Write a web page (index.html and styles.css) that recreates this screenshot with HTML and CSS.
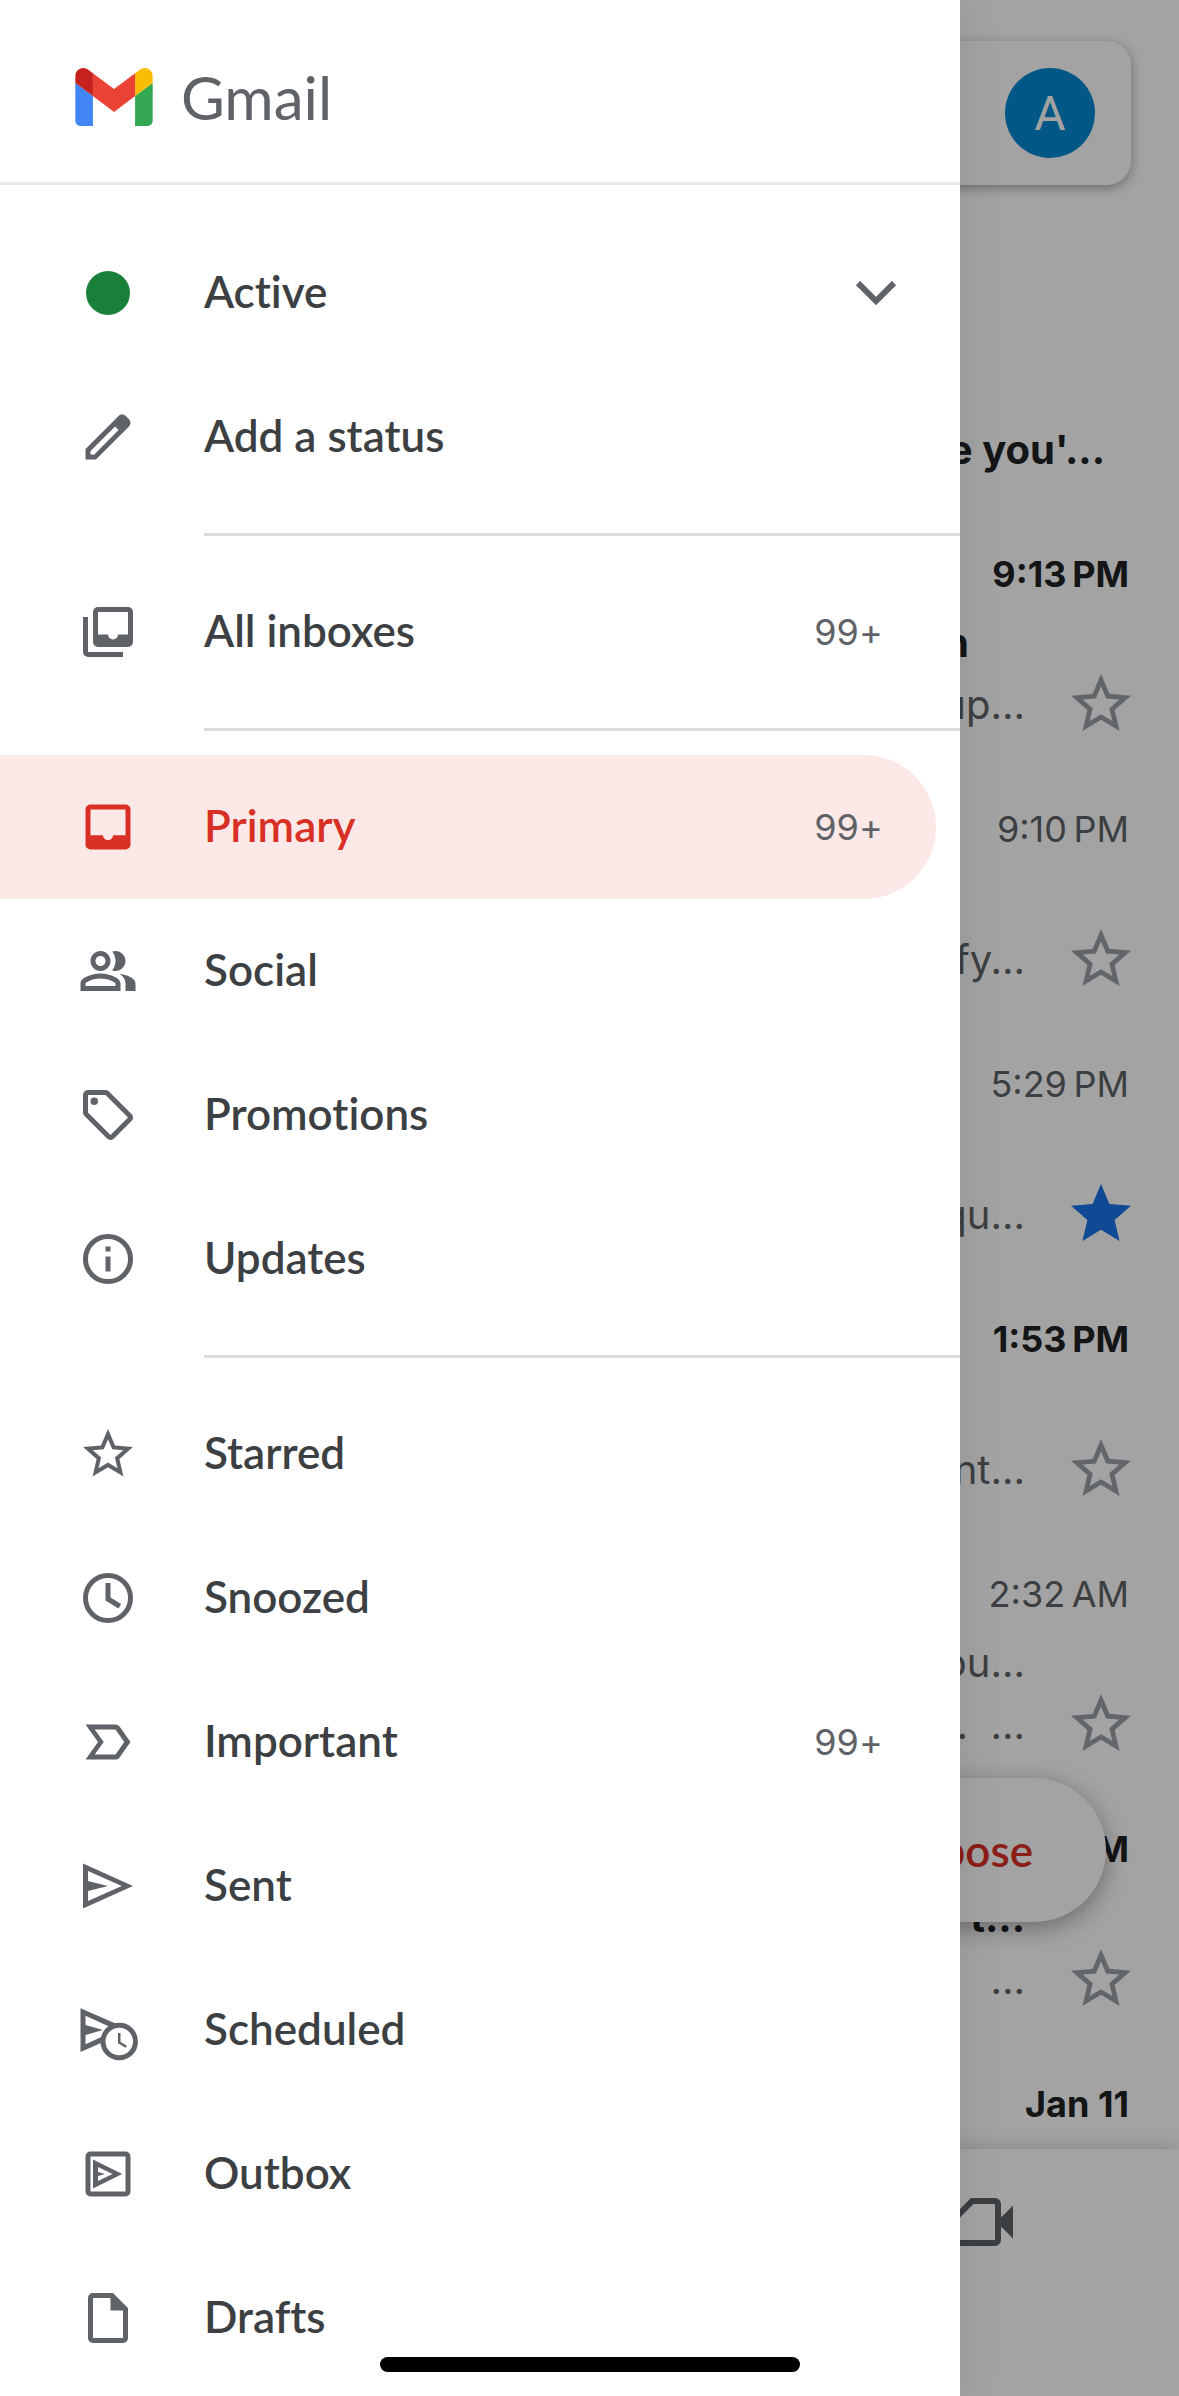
FILE: index.html
```html
<!DOCTYPE html>
<html lang="en">
<head>
    <meta charset="UTF-8">
    <meta name="viewport" content="width=device-width, initial-scale=1.0">
    <title>Gmail</title>
    <link rel="stylesheet" href="styles.css">
</head>
<body>
    <!-- shared star shapes -->
    <svg class="sprite" aria-hidden="true">
        <symbol id="star" viewBox="0 0 24 24">
            <path d="M22 9.24l-7.19-.62L12 2 9.19 8.63 2 9.24l5.46 4.73L5.82 21 12 17.27 18.18 21l-1.63-7.03L22 9.24zM12 15.4l-3.76 2.27 1-4.28-3.32-2.88 4.38-.38L12 6.1l1.71 4.04 4.38.38-3.32 2.88 1 4.28L12 15.4z"/>
        </symbol>
        <symbol id="star-full" viewBox="0 0 24 24">
            <path d="M12 17.27L18.18 21l-1.64-7.03L22 9.24l-7.19-.61L12 2 9.19 8.63 2 9.24l5.46 4.73L5.82 21z"/>
        </symbol>
    </svg>

    <div class="app">
        <main class="inbox">
            <div class="search-bar">
                <button class="avatar">A</button>
            </div>

            <ul class="mail-list">
                <li class="mail unread promo">
                    <p class="snippet">e you'...</p>
                </li>
                <li class="mail unread">
                    <time class="time">9:13&#8239;PM</time>
                    <p class="subject short">n</p>
                    <p class="snippet read">up...</p>
                    <button class="star" aria-label="Star"><svg><use href="#star"/></svg></button>
                </li>
                <li class="mail">
                    <time class="time">9:10&#8239;PM</time>
                    <p class="snippet">fy...</p>
                    <button class="star" aria-label="Star"><svg><use href="#star"/></svg></button>
                </li>
                <li class="mail">
                    <time class="time">5:29&#8239;PM</time>
                    <p class="snippet">qu...</p>
                    <button class="star on" aria-label="Unstar"><svg><use href="#star-full"/></svg></button>
                </li>
                <li class="mail unread">
                    <time class="time">1:53&#8239;PM</time>
                    <p class="snippet read">nt...</p>
                    <button class="star" aria-label="Star"><svg><use href="#star"/></svg></button>
                </li>
                <li class="mail">
                    <time class="time">2:32&#8239;AM</time>
                    <p class="subject">ou...</p>
                    <p class="snippet">e. &nbsp;...</p>
                    <button class="star" aria-label="Star"><svg><use href="#star"/></svg></button>
                </li>
                <li class="mail unread">
                    <time class="time">PM</time>
                    <p class="subject">r t...</p>
                    <p class="snippet read">...</p>
                    <button class="star" aria-label="Star"><svg><use href="#star"/></svg></button>
                </li>
                <li class="mail unread">
                    <time class="time">Jan 11</time>
                </li>
            </ul>

            <button class="compose">Compose</button>

            <nav class="tabs">
                <button class="tab" aria-label="Meet">
                    <svg viewBox="0 0 24 24"><path d="M8 4L2 10v8a2 2 0 0 0 2 2h12a2 2 0 0 0 2-2v-4.5l4 4v-11l-4 4V6a2 2 0 0 0-2-2H8zm.8 2H16v12H4v-7.2L8.8 6z"/></svg>
                </button>
            </nav>
        </main>

        <div class="scrim"></div>

        <aside class="drawer">
            <header class="brand">
                <svg class="logo" viewBox="52 42 88 66">
                    <path fill="#4285f4" d="M58 108h14V74L52 59v43c0 3.32 2.69 6 6 6"/>
                    <path fill="#34a853" d="M120 108h14c3.32 0 6-2.69 6-6V59l-20 15"/>
                    <path fill="#fbbc04" d="M120 48v26l20-15v-8c0-7.42-8.47-11.65-14.4-7.2"/>
                    <path fill="#ea4335" d="M72 74V48l24 18 24-18v26L96 92"/>
                    <path fill="#c5221f" d="M52 51v8l20 15V48l-5.6-4.2c-5.94-4.45-14.4-.22-14.4 7.2"/>
                </svg>
                <h1>Gmail</h1>
            </header>

            <nav class="menu">
                <button class="item">
                    <span class="icon"><span class="dot"></span></span>
                    <span class="label">Active</span>
                    <svg class="chevron" viewBox="0 0 40 24"><path d="M2 2l18 18L38 2"/></svg>
                </button>
                <a class="item" href="#">
                    <svg class="icon" viewBox="0 0 24 24"><path d="M20.41 4.94l-1.35-1.35c-.78-.78-2.05-.78-2.83 0L3 16.82V21h4.18L20.41 7.77c.79-.78.79-2.05 0-2.83zM6.41 19.06L5 19v-1.36l9.82-9.82 1.41 1.41z"/></svg>
                    <span class="label">Add a status</span>
                </a>
                <hr>
                <a class="item" href="#">
                    <svg class="icon" viewBox="0 0 24 24"><path d="M20 2H8a2 2 0 0 0-2 2v12a2 2 0 0 0 2 2h12a2 2 0 0 0 2-2V4a2 2 0 0 0-2-2zm0 11h-4a2 2 0 0 1-4 0H8V4h12zM4 6H2v14a2 2 0 0 0 2 2h14v-2H4z"/></svg>
                    <span class="label">All inboxes</span>
                    <span class="count">99+</span>
                </a>
                <hr>
                <a class="item selected" href="#">
                    <svg class="icon" viewBox="0 0 24 24"><path d="M19 3H5a2 2 0 0 0-2 2v14a2 2 0 0 0 2 2h14a2 2 0 0 0 2-2V5a2 2 0 0 0-2-2zm0 12.3h-5a2 2 0 0 1-4 0H5V5h14z"/></svg>
                    <span class="label">Primary</span>
                    <span class="count">99+</span>
                </a>
                <a class="item" href="#">
                    <svg class="icon" viewBox="0 0 24 24"><path d="M9 13c-2.67 0-8 1.34-8 4v3h16v-3c0-2.66-5.33-4-8-4zm6 5H3v-1c.2-.7 3.3-2 6-2s5.8 1.3 6 2zM9 12c2.21 0 4-1.79 4-4s-1.79-4-4-4-4 1.79-4 4 1.79 4 4 4zm0-6c1.1 0 2 .9 2 2s-.9 2-2 2-2-.9-2-2 .9-2 2-2zM16.67 13.13C18.04 14.06 19 15.32 19 17v3h4v-3c0-2.18-3.58-3.47-6.33-3.87zM15 12c2.21 0 4-1.79 4-4s-1.79-4-4-4c-.47 0-.91.1-1.33.24C14.5 5.27 15 6.58 15 8s-.5 2.73-1.33 3.76c.42.14.86.24 1.33.24z"/></svg>
                    <span class="label">Social</span>
                </a>
                <a class="item" href="#">
                    <svg class="icon" viewBox="0 0 24 24"><path d="M21.41 11.58l-9-9C12.05 2.22 11.55 2 11 2H4c-1.1 0-2 .9-2 2v7c0 .55.22 1.05.59 1.42l9 9c.36.36.86.58 1.41.58s1.05-.22 1.41-.59l7-7c.37-.36.59-.86.59-1.41s-.23-1.06-.59-1.42zM13 20.01L4 11V4h7l9 9z"/><circle cx="6.5" cy="6.5" r="1.5"/></svg>
                    <span class="label">Promotions</span>
                </a>
                <a class="item" href="#">
                    <svg class="icon" viewBox="0 0 24 24"><circle class="line" cx="12" cy="12" r="9"/><path d="M11 7h2v2h-2zM11 11h2v6h-2z"/></svg>
                    <span class="label">Updates</span>
                </a>
                <hr>
                <a class="item" href="#">
                    <svg class="icon"><use href="#star"/></svg>
                    <span class="label">Starred</span>
                </a>
                <a class="item" href="#">
                    <svg class="icon" viewBox="0 0 24 24"><circle class="line" cx="12" cy="12" r="9"/><path class="line" d="M12 6v6.4l4.7 2.9"/></svg>
                    <span class="label">Snoozed</span>
                </a>
                <a class="item" href="#">
                    <svg class="icon" viewBox="0 0 24 24"><path d="M3 5h12c.65 0 1.26.31 1.63.84L21 12l-4.37 6.16c-.37.52-.98.84-1.63.84H3l5-7zm3.7 2l3.6 5-3.6 5H15l3.5-5L15 7z"/></svg>
                    <span class="label">Important</span>
                    <span class="count">99+</span>
                </a>
                <a class="item" href="#">
                    <svg class="icon" viewBox="0 0 24 24"><path d="M2 3l20 9-20 9zM4 6v4l8 2-8 2v4l13.5-6z"/></svg>
                    <span class="label">Sent</span>
                </a>
                <a class="item" href="#">
                    <svg class="icon" viewBox="0 0 24 24"><path d="M1 3.3l20 8.7-20 8.8zM3 6.3v3.7l7 2-7 2v3.7L15.5 12z"/><circle class="line face" cx="16.5" cy="16.6" r="6.5"/><path class="hand" d="M16.5 13.2v3.8l2.8 1.7"/></svg>
                    <span class="label">Scheduled</span>
                </a>
                <a class="item" href="#">
                    <svg class="icon" viewBox="0 0 24 24"><path d="M19 3H5a2 2 0 0 0-2 2v14a2 2 0 0 0 2 2h14a2 2 0 0 0 2-2V5a2 2 0 0 0-2-2zm0 16H5V5h14zM6 6.2L17.7 12 6 17.8zM8 9.2v2l2.8.8-2.8.8v2l5.8-2.8z"/></svg>
                    <span class="label">Outbox</span>
                </a>
                <a class="item" href="#">
                    <svg class="icon" viewBox="0 0 24 24"><path d="M6 2a2 2 0 0 0-2 2v16a2 2 0 0 0 2 2h12a2 2 0 0 0 2-2V8l-6-6zM6 20V4h7v5h5v11z"/></svg>
                    <span class="label">Drafts</span>
                </a>
            </nav>
        </aside>
    </div>

    <div class="home-bar"></div>
</body>
</html>
```
FILE: styles.css
```css
* {
    box-sizing: border-box;
}
body {
    margin: 0;
    background-color: #fff;
    font-family: Inter, "Liberation Sans", sans-serif;
    color: #202124;
}
h1, p, ul {
    margin: 0;
    padding: 0;
}
button {
    padding: 0;
    border: none;
    background: none;
    font: inherit;
    color: inherit;
    cursor: pointer;
}
.sprite {
    display: none;
}

/* inbox, scrim and drawer share one grid cell */
.app {
    display: grid;
    grid-template-columns: 100%;
    min-height: 100vh;
}
.inbox, .scrim, .drawer {
    grid-area: 1 / 1;
}

/* inbox */
.inbox {
    position: relative;
    display: flex;
    flex-direction: column;
    padding-top: 41px;
    overflow: hidden;
}
.search-bar {
    display: flex;
    align-items: center;
    justify-content: flex-end;
    height: 144px;
    margin: 0 48px;
    padding-right: 36px;
    border-radius: 24px;
    box-shadow: 0 3px 12px rgba(0, 0, 0, 0.35);
}
.avatar {
    width: 90px;
    height: 90px;
    border-radius: 50%;
    background-color: #0288d1;
    color: #fff;
    font-family: Roboto, sans-serif;
    font-size: 48px;
}
.mail-list {
    flex: 1 1 0px;
    min-height: 0;
    padding-top: 97px;
    overflow: hidden;
    list-style: none;
}
.mail {
    display: grid;
    grid-template-columns: 1fr 72px;
    grid-template-rows: 74px 62px 62px;
    column-gap: 40px;
    align-items: center;
    height: 255px;
    padding: 0 42px 0 48px;
    font-size: 40px;
    color: #5f6368;
}
.time {
    grid-area: 1 / 1 / 2 / 3;
    padding-right: 8px;
    font-size: 36px;
    text-align: right;
}
.subject {
    grid-area: 2 / 1;
    text-align: right;
}
.subject.short {
    padding-right: 56px;
}
.snippet {
    grid-area: 3 / 1;
    text-align: right;
}
.unread {
    font-weight: 700;
    color: #202124;
}
.snippet.read {
    font-weight: 400;
    color: #5f6368;
}
.promo .snippet {
    grid-column: 1 / 3;
    padding-right: 32px;
}
.star {
    grid-area: 3 / 2;
    height: 72px;
    color: #9aa0a6;
}
.star.on {
    color: #1a73e8;
}
.star svg {
    display: block;
    width: 72px;
    height: 72px;
    fill: currentColor;
}
.compose {
    position: absolute;
    right: 73px;
    bottom: 474px;
    height: 144px;
    padding: 0 73px 0 160px;
    border-radius: 72px;
    background-color: #fff;
    box-shadow: 0 6px 24px rgba(0, 0, 0, 0.35);
    color: #d93025;
    font-family: Lato, sans-serif;
    font-size: 44px;
    font-weight: 600;
}
.tabs {
    display: grid;
    grid-template-columns: repeat(3, 1fr);
    height: 247px;
    background-color: #fff;
    box-shadow: 0 0 20px rgba(0, 0, 0, 0.2);
    z-index: 1;
}
.tab {
    grid-column: 3;
    height: 146px;
}
.tab svg {
    display: block;
    width: 72px;
    height: 72px;
    margin: 0 auto;
    fill: #5f6368;
    fill-rule: evenodd;
}
.scrim {
    z-index: 2;
    background-color: rgba(0, 0, 0, 0.36);
}

/* drawer */
.drawer {
    z-index: 3;
    width: 81.4%;
    background-color: #fff;
    box-shadow: 0 0 40px rgba(0, 0, 0, 0.1);
}
.brand {
    display: flex;
    align-items: center;
    gap: 28px;
    height: 185px;
    padding: 12px 0 0 75px;
    border-bottom: 3px solid #e8eaed;
}
.logo {
    width: 78px;
    height: 58px;
}
h1 {
    font-family: Lato, sans-serif;
    font-size: 60px;
    font-weight: 400;
    color: #5f6368;
}
.menu {
    padding-top: 36px;
}
.item {
    display: flex;
    align-items: center;
    width: 100%;
    height: 144px;
    padding: 0 77px 0 78px;
    color: #3c4043;
    font-family: Lato, sans-serif;
    font-size: 44px;
    font-weight: 600;
    font-variant-ligatures: none;
    text-align: left;
    text-decoration: none;
}
.icon {
    display: flex;
    align-items: center;
    justify-content: center;
    flex: none;
    width: 60px;
    height: 60px;
    margin-right: 66px;
    overflow: visible;
    fill: #5f6368;
    fill-rule: evenodd;
}
.line {
    fill: none;
    stroke: #5f6368;
    stroke-width: 2;
}
.face {
    fill: #fff;
}
.hand {
    fill: none;
    stroke: #5f6368;
    stroke-width: 1;
}
.dot {
    width: 44px;
    height: 44px;
    border-radius: 50%;
    background-color: #188038;
}
.label {
    flex: 1;
    padding-bottom: 4px;
}
.count {
    color: #5f6368;
    font-family: Inter, sans-serif;
    font-size: 36px;
    font-weight: 400;
}
.chevron {
    width: 40px;
    height: 24px;
    margin-right: -13px;
    fill: none;
    stroke: #5f6368;
    stroke-width: 6;
}
.selected {
    width: auto;
    margin-right: 24px;
    padding-right: 53px;
    border-radius: 0 72px 72px 0;
    background-color: #fce8e6;
    color: #d93025;
}
.selected .icon {
    fill: #d93025;
}
hr {
    height: 3px;
    margin: 24px 0 24px 204px;
    border: none;
    background-color: #dadce0;
}

.home-bar {
    position: fixed;
    bottom: 24px;
    left: 50%;
    z-index: 4;
    width: 420px;
    height: 15px;
    margin-left: -210px;
    border-radius: 8px;
    background-color: #000;
}
```
